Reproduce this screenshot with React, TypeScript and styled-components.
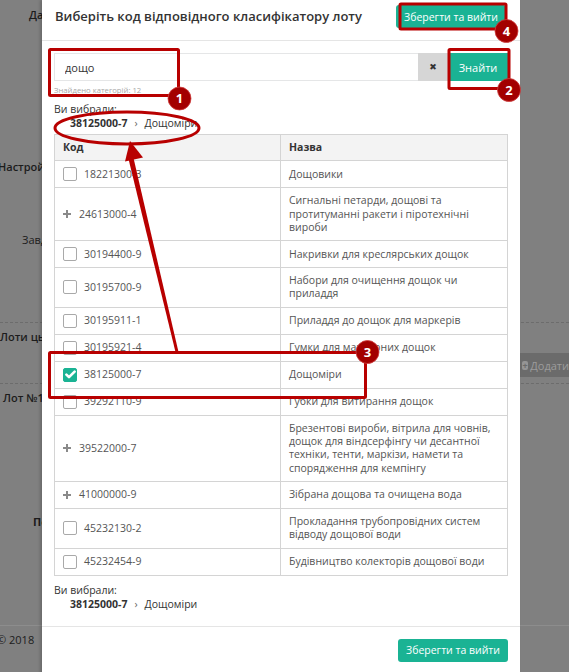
import React from "react";
import styled, { createGlobalStyle } from "styled-components";

const Global = createGlobalStyle`
  html, body { margin: 0; padding: 0; }
  body { font-family: "Open Sans", "Noto Sans", sans-serif; }
  * { box-sizing: border-box; }
`;

const GREEN = "#1ab394";
const RED = "#b80000";

const Stage = styled.div`
  position: relative;
  width: 569px;
  height: 672px;
  overflow: hidden;
  background: #808080;
`;

/* ---------- background page (dimmed) ---------- */
const Page = styled.div`
  display: flex;
  flex-direction: column;
  color: #1c1c1c;
  font-size: 11px;
`;

const BgLabel = styled.div<{ $mt: number; $indent: number; $weight?: number }>`
  margin-top: ${(p) => p.$mt}px;
  margin-left: ${(p) => p.$indent}px;
  height: 16px;
  line-height: 16px;
  font-weight: ${(p) => p.$weight ?? 600};
  white-space: nowrap;
`;

const Dashed = styled.div<{ $mt: number }>`
  margin-top: ${(p) => p.$mt}px;
  border-top: 1px dashed #6c6c6c;
`;

const FooterRule = styled.div<{ $mt: number }>`
  margin-top: ${(p) => p.$mt}px;
  border-top: 1px solid #8d8d8d;
`;

const LotsRow = styled.div`
  height: 60px;
  display: flex;
  justify-content: space-between;
  align-items: flex-start;
`;

const AddBand = styled.div`
  align-self: flex-end;
  margin-bottom: 6px;
  width: 49px;
  height: 24px;
  background: #6b6b6b;
  color: #9c9c9c;
  display: flex;
  align-items: center;
  gap: 2px;
  padding-left: 2px;
  white-space: nowrap;
  overflow: hidden;
  font-size: 11px;
`;

const AddIcon = styled.span`
  width: 9px;
  height: 9px;
  border-radius: 2px;
  background: #959595;
  color: #6b6b6b;
  display: inline-flex;
  align-items: center;
  justify-content: center;
  font-size: 9px;
  font-weight: 700;
  line-height: 1;
`;

/* ---------- modal ---------- */
const Modal = styled.div`
  position: absolute;
  left: 42px;
  top: 0;
  width: 478px;
  height: 700px;
  background: #fff;
  box-shadow: -2px 0 3px rgba(0, 0, 0, 0.18);
  display: flex;
  flex-direction: column;
  color: #333;
`;

const Header = styled.div`
  height: 41px;
  border-bottom: 1px solid #e5e5e5;
  display: flex;
  align-items: flex-start;
  justify-content: space-between;
  padding: 5px 14px 0 13px;
`;

const Title = styled.h4`
  margin: 0;
  font-size: 13px;
  line-height: 23px;
  font-weight: 600;
  color: #333;
`;

const GreenButton = styled.button`
  height: 23px;
  padding: 0 8px;
  border: none;
  border-radius: 3px;
  background: ${GREEN};
  color: #fff;
  font-family: inherit;
  font-size: 10.5px;
  cursor: pointer;
  white-space: nowrap;
`;

const Body = styled.div`
  padding: 12px 12px 0 12px;
  display: flex;
  flex-direction: column;
`;

const SearchGroup = styled.div`
  display: flex;
  height: 28px;
`;

const SearchInput = styled.input`
  flex: 1;
  min-width: 0;
  height: 28px;
  border: 1px solid #e5e6e7;
  border-right: none;
  padding: 0 10px;
  font-family: inherit;
  font-size: 11px;
  color: #333;
  outline: none;
`;

const ClearButton = styled.div`
  width: 30px;
  height: 28px;
  background: #d6d6d6;
  display: flex;
  align-items: center;
  justify-content: center;
  color: #333;
  font-size: 9px;
  font-family: "DejaVu Sans", sans-serif;
`;

const FindButton = styled.button`
  width: 60px;
  height: 28px;
  border: none;
  background: ${GREEN};
  color: #fff;
  font-family: inherit;
  font-size: 11px;
`;

const Hint = styled.div`
  margin-top: 4px;
  font-size: 7.7px;
  line-height: 10px;
  color: #a8a8a8;
`;

const ChosenBlock = styled.div<{ $mt: number }>`
  margin-top: ${(p) => p.$mt}px;
  font-size: 10.5px;
  line-height: 14px;
  color: #333;
`;

const ChosenLine = styled.div`
  padding-left: 16px;
  display: flex;
  align-items: center;
`;

const ChosenCode = styled.span`
  font-weight: 700;
`;

const Chevron = styled.span`
  margin: 0 7px;
  color: #666;
`;

const Table = styled.table`
  margin-top: 4px;
  width: 100%;
  border-collapse: collapse;
  font-size: 10.5px;
  line-height: 13.3px;
  color: #555;
`;

const Th = styled.th`
  background: #f3f3f3;
  border: 1px solid #d4d4d4;
  padding: 6px 8px;
  text-align: left;
  font-weight: 700;
  color: #333;
  height: 26px;
`;

const Td = styled.td<{ $w?: number }>`
  border: 1px solid #d4d4d4;
  padding: 6px 8px;
  vertical-align: middle;
  ${(p) => (p.$w ? `width: ${p.$w}px;` : "")}
`;

const CodeCell = styled.div<{ $gap: number }>`
  display: flex;
  align-items: center;
  gap: ${(p) => p.$gap}px;
  min-height: 14px;
`;

const Check = styled.span<{ $on?: boolean }>`
  width: 14px;
  height: 14px;
  border-radius: 2px;
  border: 1px solid ${(p) => (p.$on ? GREEN : "#a9a9a9")};
  background: ${(p) => (p.$on ? GREEN : "#fff")};
  display: inline-flex;
  align-items: center;
  justify-content: center;
  flex: none;
`;

const Footer = styled.div`
  margin-top: 15px;
  border-top: 1px solid #e5e5e5;
  padding: 12px 12px;
  display: flex;
  justify-content: flex-end;
`;

const Overlay = styled.svg`
  position: absolute;
  left: 0;
  top: 0;
  pointer-events: none;
`;

const PlusIcon = () => (
  <svg width="8" height="8" viewBox="0 0 8 8">
    <rect x="3" y="0" width="2" height="8" fill="#8a8a8a" />
    <rect x="0" y="3" width="8" height="2" fill="#8a8a8a" />
  </svg>
);

const Tick = () => (
  <svg width="11" height="9" viewBox="0 0 11 9">
    <path d="M1.4 4.6 L4 7.2 L9.6 1.6" stroke="#fff" strokeWidth="2.6" fill="none" strokeLinecap="round" strokeLinejoin="round" />
  </svg>
);

type Row = { code: string; name: string; kind: "check" | "checked" | "plus" };

const rows: Row[] = [
  { code: "18221300-3", name: "Дощовики", kind: "check" },
  { code: "24613000-4", name: "Сигнальні петарди, дощові та протитуманні ракети і піротехнічні вироби", kind: "plus" },
  { code: "30194400-9", name: "Накривки для креслярських дощок", kind: "check" },
  { code: "30195700-9", name: "Набори для очищення дощок чи приладдя", kind: "check" },
  { code: "30195911-1", name: "Приладдя до дощок для маркерів", kind: "check" },
  { code: "30195921-4", name: "Гумки для маркерних дощок", kind: "check" },
  { code: "38125000-7", name: "Дощоміри", kind: "checked" },
  { code: "39292110-9", name: "Губки для витирання дощок", kind: "check" },
  {
    code: "39522000-7",
    name: "Брезентові вироби, вітрила для човнів, дощок для віндсерфінгу чи десантної техніки, тенти, маркізи, намети та спорядження для кемпінгу",
    kind: "plus",
  },
  { code: "41000000-9", name: "Зібрана дощова та очищена вода", kind: "plus" },
  { code: "45232130-2", name: "Прокладання трубопровідних систем відводу дощової води", kind: "check" },
  { code: "45232454-9", name: "Будівництво колекторів дощової води", kind: "check" },
];

const Badge = ({ x, y, n }: { x: number; y: number; n: string }) => (
  <g>
    <circle cx={x} cy={y} r={11.5} fill="#a30000" stroke="#d04040" strokeWidth={0.8} />
    <text
      x={x}
      y={y + 4.6}
      textAnchor="middle"
      fontFamily="'Open Sans', sans-serif"
      fontWeight={700}
      fontSize={13}
      fill="#fff"
    >
      {n}
    </text>
  </g>
);

const Chosen = ({ mt }: { mt: number }) => (
  <ChosenBlock $mt={mt}>
    <div>Ви вибрали:</div>
    <ChosenLine>
      <ChosenCode>38125000-7</ChosenCode>
      <Chevron>›</Chevron>
      <span>Дощоміри</span>
    </ChosenLine>
  </ChosenBlock>
);

export default function App() {
  return (
    <Stage>
      <Global />
      <Page>
        <BgLabel $mt={7} $indent={29}>Дата</BgLabel>
        <BgLabel $mt={136} $indent={-2}>Настройки</BgLabel>
        <BgLabel $mt={57} $indent={22} $weight={500}>Завдання</BgLabel>
        <Dashed $mt={74} />
        <LotsRow>
          <BgLabel $mt={6} $indent={0}>Лоти цього</BgLabel>
          <AddBand>
            <AddIcon>+</AddIcon>
            <span>Додати</span>
          </AddBand>
        </LotsRow>
        <Dashed $mt={0} />
        <BgLabel $mt={6} $indent={3}>Лот №1</BgLabel>
        <BgLabel $mt={108} $indent={33} $weight={700}>Пост</BgLabel>
        <FooterRule $mt={95} />
        <BgLabel $mt={6} $indent={-3} $weight={400}>© 2018</BgLabel>
      </Page>

      <Modal>
        <Header>
          <Title>Виберіть код відповідного класифікатору лоту</Title>
          <GreenButton>Зберегти та вийти</GreenButton>
        </Header>
        <Body>
          <SearchGroup>
            <SearchInput defaultValue="дощо" readOnly />
            <ClearButton>✖</ClearButton>
            <FindButton>Знайти</FindButton>
          </SearchGroup>
          <Hint>Знайдено категорій: 12</Hint>
          <Chosen mt={7} />
          <Table>
            <thead>
              <tr>
                <Th style={{ width: 226 }}>Код</Th>
                <Th>Назва</Th>
              </tr>
            </thead>
            <tbody>
              {rows.map((r) => (
                <tr key={r.code}>
                  <Td $w={226}>
                    <CodeCell $gap={r.kind === "plus" ? 8 : 7}>
                      {r.kind === "plus" ? (
                        <PlusIcon />
                      ) : (
                        <Check $on={r.kind === "checked"}>{r.kind === "checked" && <Tick />}</Check>
                      )}
                      <span>{r.code}</span>
                    </CodeCell>
                  </Td>
                  <Td>{r.name}</Td>
                </tr>
              ))}
            </tbody>
          </Table>
          <Chosen mt={7} />
        </Body>
        <Footer>
          <GreenButton>Зберегти та вийти</GreenButton>
        </Footer>
      </Modal>

      <Overlay width={569} height={672} viewBox="0 0 569 672">
        <g fill="none" stroke={RED} strokeWidth={3}>
          <rect x={49.5} y={49.5} width={129} height={46} rx={1} />
          <rect x={449} y={49.5} width={60} height={39} rx={1} />
          <rect x={400} y={4} width={106} height={25} rx={1} />
          <rect x={49.5} y={352.5} width={316} height={45} rx={1} />
          <ellipse cx={127} cy={128} rx={72} ry={16} />
        </g>
        <polygon points="175.5,352 178.5,352 133.5,158 128.5,159" fill={RED} />
        <polygon points="130,141 143,157.5 125,161.5" fill={RED} />
        <Badge x={179.5} y={98.5} n="1" />
        <Badge x={509} y={90} n="2" />
        <Badge x={367.5} y={352} n="3" />
        <Badge x={506.5} y={31} n="4" />
      </Overlay>
    </Stage>
  );
}
